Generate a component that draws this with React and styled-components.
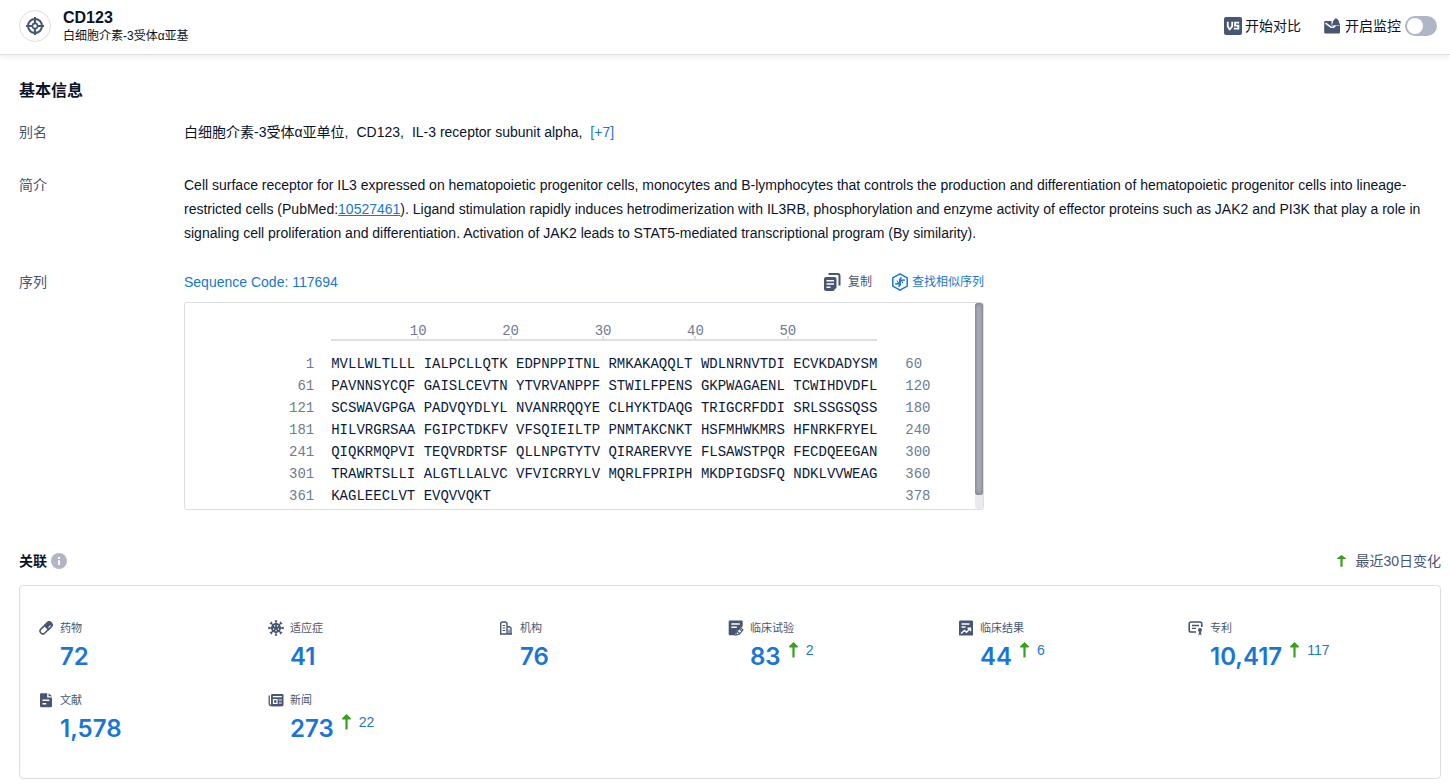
import React, { useState } from 'react'
import styled, { createGlobalStyle } from 'styled-components'


const sequence = [
    [1, 'MVLLWLTLLL IALPCLLQTK EDPNPPITNL RMKAKAQQLT WDLNRNVTDI ECVKDADYSM', 60],
    [61, 'PAVNNSYCQF GAISLCEVTN YTVRVANPPF STWILFPENS GKPWAGAENL TCWIHDVDFL', 120],
    [121, 'SCSWAVGPGA PADVQYDLYL NVANRRQQYE CLHYKTDAQG TRIGCRFDDI SRLSSGSQSS', 180],
    [181, 'HILVRGRSAA FGIPCTDKFV VFSQIEILTP PNMTAKCNKT HSFMHWKMRS HFNRKFRYEL', 240],
    [241, 'QIQKRMQPVI TEQVRDRTSF QLLNPGTYTV QIRARERVYE FLSAWSTPQR FECDQEEGAN', 300],
    [301, 'TRAWRTSLLI ALGTLLALVC VFVICRRYLV MQRLFPRIPH MKDPIGDSFQ NDKLVVWEAG', 360],
    [361, 'KAGLEECLVT EVQVVQKT', 378],
]


/* icons */
const TargetIcon = () => (
    <svg width='18' height='18' viewBox='0 0 18 18' fill='none' stroke='currentColor' strokeWidth='2'>
        <circle cx='9' cy='9' r='7' />
        <circle cx='9' cy='9' r='2.6' strokeWidth='1.6' />
        <path d='M9 0v6M9 12v6M0 9h6M12 9h6' strokeWidth='2.2' />
    </svg>
)

const VsIcon = () => (
    <svg width='18' height='18' viewBox='0 0 18 18'>
        <rect width='18' height='18' rx='2' fill='currentColor' />
        <path d='M3.8 4.800v4.400l1.700 3.200h.4l2.300-3.200V4.800M15.200 5.700h-4.200v3h3.400v3H9.800' fill='none' stroke='#fff' strokeWidth='1.800' />
    </svg>
)

const MonitorIcon = () => (
    <svg width='17' height='16' viewBox='0 0 17 16' fill='currentColor'>
        <path d='M1.200 3H7.500v4.500H16v7a1 1 0 0 1-1 1H1.200a1 1 0 0 1-1-1V4a1 1 0 0 1 1-1z' />
        <path d='M1.500 5.200L7 9.200h2.500l2-1.500' fill='none' stroke='#fff' strokeWidth='1.500' />
        <path d='M12 .2c.5 0 .9.400.9.900 1.500.6 2 2 2.200 3.300L16.200 7H7.800l1.100-2.600c.2-1.300.7-2.700 2.200-3.300 0-.5.4-.9.9-.9z' />
    </svg>
)

const CopyIcon = () => (
    <svg width='17' height='18' viewBox='0 0 17 18'>
        <path d='M4.500 1h9A2 2 0 0 1 15.500 3v9.500' fill='none' stroke='currentColor' strokeWidth='2' />
        <path d='M2 4h8.500a2 2 0 0 1 2 2v8.500L9.500 18H2a2 2 0 0 1-2-2V6a2 2 0 0 1 2-2z' fill='currentColor' />
        <path d='M2.500 7.700h7.500M2.500 11h7.500M2.500 14.300h4' stroke='#fff' strokeWidth='1.500' />
    </svg>
)

const SimilarIcon = () => (
    <svg width='16' height='18' viewBox='0 0 16 18' fill='none' stroke='currentColor' strokeWidth='1.500'>
        <path d='M8 .9l7.200 4v8.200L8 17.100.8 13.100V4.900z' />
        <path d='M3.200 10.800c2.500.4 4-.2 4.800-1.800s2.300-2.200 4.800-1.800M9.500 4.200C7.500 6 7.200 7.500 8 9s.5 3-1.500 4.800' />
        <path d='M5 7.500l1.600 3M9.400 7.400l1.600 3M7.200 6.500l2.600.6M6.200 11.200l2.400.2' strokeWidth='1' />
    </svg>
)

const InfoIcon = () => (
    <svg width='16' height='16' viewBox='0 0 16 16'>
        <circle cx='8' cy='8' r='8' fill='#b0b6c5' />
        <path d='M7 4h2v2H7zM7 7.200h2V12H7z' fill='#fff' />
    </svg>
)

const UpArrow = ({ size = 16 }) => (
    <svg width='9' height={size} viewBox='0 0 9 16' preserveAspectRatio='none'>
        <path d='M4.500 0L8.800 4.300a.6.600 0 0 1-.4 1.100H5.600V15.500H3.400V5.400H.6a.6.600 0 0 1-.4-1.100z' fill='#38a01c' />
    </svg>
)

const DrugIcon = () => (
    <svg width='16' height='16' viewBox='0 0 16 16'>
        <g transform='rotate(45 8 8)'>
            <rect x='5.200' y='.8' width='5.600' height='14.400' rx='2.800' fill='none' stroke='currentColor' strokeWidth='1.500' />
            <path d='M4.500 8V3.600a3.500 3.500 0 0 1 7 0V8z' fill='currentColor' />
            <path d='M9.500 3v3' stroke='#fff' strokeWidth='1' />
        </g>
    </svg>
)

const DiseaseIcon = () => (
    <svg width='16' height='16' viewBox='0 0 16 16'>
        <circle cx='8' cy='8' r='5' fill='currentColor' />
        <path d='M8 1v14M1 8h14M3 3l10 10M13 3L3 13' stroke='currentColor' strokeWidth='1.300' />
        <path d='M6.800 .9h2.400M6.800 15.100h2.400M.9 6.800v2.400M15.100 6.800v2.400M2 4l2-2M12 2l2 2M2 12l2 2M12 14l2-2' stroke='currentColor' strokeWidth='1.300' />
        <path d='M6 5.200h1.300v1.300H6zM9 5.200h1.300v1.300H9zM5 8.500h1.200v1.200H5zM9.800 8.500h1.200v1.200H9.800zM7.400 10h1.200v1.200H7.400z' fill='#fff' />
    </svg>
)

const OrgIcon = () => (
    <svg width='16' height='16' viewBox='0 0 16 16' fill='none' stroke='currentColor' strokeWidth='1.400'>
        <path d='M9 14H2.700V3.200L4.200 2h3.300L9 3.200zM9 6.800h2.500L13 8v6H9M2 14h12' />
        <path d='M4.600 5.500h2.600M4.600 8h2.600M4.600 10.500h2.600M11 9.500V14' strokeWidth='1.100' />
    </svg>
)

const TrialIcon = () => (
    <svg width='16' height='16' viewBox='0 0 16 16'>
        <path d='M1.700 .6h12a1 1 0 0 1 1 1v4.600L8.500 11 7 15.300H1.700a1 1 0 0 1-1-1V1.600a1 1 0 0 1 1-1z' fill='currentColor' />
        <path d='M3.300 4h8.500M3.300 7.200h5.500' stroke='#fff' strokeWidth='1.500' />
        <path d='M12.500 7.500L15 10l-3.500 4-3.700 1.200.9-3.800zM9.500 11.500l2 2M11.700 9.200l2 2' fill='none' stroke='currentColor' strokeWidth='1.100' />
    </svg>
)

const ResultIcon = () => (
    <svg width='16' height='16' viewBox='0 0 16 16'>
        <rect x='1' y='.6' width='14' height='15' rx='1.200' fill='currentColor' />
        <path d='M3.500 4h8M3.500 7h4M3 13.500l3.500-3 2 1.700 3.700-4M9.500 8.200h3v3' fill='none' stroke='#fff' strokeWidth='1.400' />
    </svg>
)

const PatentIcon = () => (
    <svg width='16' height='16' viewBox='0 0 16 16' fill='none' stroke='currentColor' strokeWidth='1.600'>
        <path d='M8 12H3a1.800 1.800 0 0 1-1.800-1.800V3.800A1.800 1.800 0 0 1 3 2h9a1.800 1.800 0 0 1 1.800 1.800V7' />
        <path d='M4 5.500h7M4 8.300h4' strokeWidth='1.300' />
        <circle cx='12' cy='10' r='2' fill='currentColor' stroke='none' />
        <path d='M11.200 11.500l-.8 4 1.600-1.200 1.600 1.200-.8-4z' fill='currentColor' stroke='none' />
    </svg>
)

const PaperIcon = () => (
    <svg width='16' height='16' viewBox='0 0 16 16'>
        <path d='M3.200 1.200h6v4.300h4.800V14a1.200 1.200 0 0 1-1.200 1.200H3.200A1.200 1.200 0 0 1 2 14V2.400a1.200 1.200 0 0 1 1.200-1.200zM10.600 1.200L14 4.200h-3.400z' fill='currentColor' />
        <path d='M4.500 8.200h6.800M4.500 11.700h3.800' stroke='#fff' strokeWidth='1.400' />
    </svg>
)

const NewsIcon = () => (
    <svg width='16' height='16' viewBox='0 0 16 16'>
        <path d='M1.200 3.500V11.500a2 2 0 0 0 2 2H13' fill='none' stroke='currentColor' strokeWidth='1.300' />
        <rect x='3' y='2' width='12.500' height='12.200' rx='1.300' fill='currentColor' />
        <path d='M4.800 4.600h9M10.800 8h3M10.800 11h3' stroke='#fff' strokeWidth='1.200' />
        <rect x='5.500' y='7.600' width='3.500' height='3.800' fill='none' stroke='#fff' strokeWidth='1.200' />
    </svg>
)


const stats = [
    { icon: <DrugIcon />, label: '药物', value: '72' },
    { icon: <DiseaseIcon />, label: '适应症', value: '41' },
    { icon: <OrgIcon />, label: '机构', value: '76' },
    { icon: <TrialIcon />, label: '临床试验', value: '83', change: '2' },
    { icon: <ResultIcon />, label: '临床结果', value: '44', change: '6' },
    { icon: <PatentIcon />, label: '专利', value: '10,417', change: '117' },
    { icon: <PaperIcon />, label: '文献', value: '1,578' },
    { icon: <NewsIcon />, label: '新闻', value: '273', change: '22' },
]


const App = () => {
    const [monitor, setMonitor] = useState(false)

    return(
        <>
            <GlobalStyle />
            <Header>
                <Avatar><TargetIcon /></Avatar>
                <Names>
                    <Title>CD123</Title>
                    <Subtitle>白细胞介素-3受体α亚基</Subtitle>
                </Names>
                <HeaderActions>
                    <CompareButton type='button'><VsIcon />开始对比</CompareButton>
                    <MonitorLabel>
                        <MonitorIcon />
                        <span>开启监控</span>
                        <Switch type='checkbox' checked={monitor} onChange={e => setMonitor(e.target.checked)} />
                    </MonitorLabel>
                </HeaderActions>
            </Header>

            <Main>
                <SectionTitle>基本信息</SectionTitle>
                <InfoList>
                    <InfoRow>
                        <Term>别名</Term>
                        <Aliases>
                            <span>白细胞介素-3受体α亚单位,</span>
                            <span>CD123,</span>
                            <span>IL-3 receptor subunit alpha,</span>
                            <Link href='#more'>[+7]</Link>
                        </Aliases>
                    </InfoRow>
                    <InfoRow>
                        <Term>简介</Term>
                        <Value>
                            Cell surface receptor for IL3 expressed on hematopoietic progenitor cells, monocytes and B-lymphocytes that controls the production and differentiation of hematopoietic progenitor cells into lineage-restricted cells (PubMed:<Link $underline href='#10527461'>10527461</Link>). Ligand stimulation rapidly induces hetrodimerization with IL3RB, phosphorylation and enzyme activity of effector proteins such as JAK2 and PI3K that play a role in signaling cell proliferation and differentiation. Activation of JAK2 leads to STAT5-mediated transcriptional program (By similarity).
                        </Value>
                    </InfoRow>
                    <InfoRow>
                        <Term>序列</Term>
                        <SequenceBlock>
                            <SequenceHead>
                                <Link href='#117694'>Sequence Code: 117694</Link>
                                <SequenceActions>
                                    <ToolButton type='button'><CopyIcon />复制</ToolButton>
                                    <ToolButton type='button' $primary><SimilarIcon />查找相似序列</ToolButton>
                                </SequenceActions>
                            </SequenceHead>
                            <SequenceBox>
                                <SequenceScroll>
                                    <SequenceTable>
                                        <thead>
                                            <tr>
                                                <td />
                                                <RulerCell>
                                                    <Ruler>
                                                        {[10, 20, 30, 40, 50].map(n => <Mark key={n}><span>{n}</span></Mark>)}
                                                    </Ruler>
                                                </RulerCell>
                                                <td />
                                            </tr>
                                        </thead>
                                        <tbody>
                                            {sequence.map(([start, letters, end]) => (
                                                <tr key={start}>
                                                    <Position $start>{start}</Position>
                                                    <Letters>{letters}</Letters>
                                                    <Position>{end}</Position>
                                                </tr>
                                            ))}
                                        </tbody>
                                    </SequenceTable>
                                </SequenceScroll>
                                <Track><Thumb /></Track>
                            </SequenceBox>
                        </SequenceBlock>
                    </InfoRow>
                </InfoList>

                <RelatedHead>
                    <RelatedTitle>关联<InfoIcon /></RelatedTitle>
                    <Legend><UpArrow size={12} />最近30日变化</Legend>
                </RelatedHead>
                <Panel>
                    {stats.map(item => (
                        <Stat key={item.label}>
                            {item.icon}
                            <div>
                                <StatLabel>{item.label}</StatLabel>
                                <StatNumbers>
                                    <StatValue href='#stat'>{item.value}</StatValue>
                                    {item.change && <StatChange href='#change'><UpArrow />{item.change}</StatChange>}
                                </StatNumbers>
                            </div>
                        </Stat>
                    ))}
                </Panel>
            </Main>
        </>
    )
}



export default App



const GlobalStyle = createGlobalStyle`
    *{
        box-sizing: border-box;
    }

    body{
        margin: 0;
        background: #fff;
        color: #0b1429;
        font-family: 'Liberation Sans', Arial, 'Noto Sans CJK SC', sans-serif;
        font-size: 14px;
        line-height: 24px;
    }

    button{
        border: 0;
        padding: 0;
        background: none;
        font: inherit;
        cursor: pointer;
    }

    svg{
        flex: none;
        display: block;
    }
`;


/* header */
const Header = styled.header`
    display: flex;
    align-items: center;
    gap: 12px;
    padding: 8px 13px 10px 19px;
    border-bottom: 1px solid #dcdee6;
    box-shadow: 0 2px 5px rgba(20,30,60,0.08);
`;

const Avatar = styled.div`
    width: 32px;
    height: 32px;
    border: 1px solid #dcdee6;
    border-radius: 50%;
    color: #475672;
    display: flex;
    justify-content: center;
    align-items: center;
`;

const Names = styled.div`
    flex: 1;
`;

const Title = styled.h1`
    margin: 0;
    font-size: 16px;
    line-height: 20px;
`;

const Subtitle = styled.div`
    font-size: 12px;
    line-height: 16px;
`;

const HeaderActions = styled.div`
    display: flex;
    align-items: center;
    gap: 23px;

    svg{
        color: #475672;
    }
`;

const CompareButton = styled.button`
    color: inherit;
    display: flex;
    align-items: center;
    gap: 3px;
`;

const MonitorLabel = styled.label`
    display: flex;
    align-items: center;
    gap: 4px;
`;

const Switch = styled.input`
    appearance: none;
    margin: 0;
    width: 32px;
    height: 20px;
    padding: 2px;
    border-radius: 10px;
    background: ${props => props.checked ? '#1976d6' : '#b0b6c5'};
    display: flex;
    justify-content: ${props => props.checked ? 'flex-end' : 'flex-start'};

    &::before{
        content: '';
        width: 16px;
        height: 16px;
        border-radius: 50%;
        background: #fff;
    }
`;


/* basic info */
const Main = styled.main`
    padding: 24px 9px 5px 19px;
`;

const SectionTitle = styled.h2`
    margin: 0 0 17px;
    font-size: 16px;
    line-height: 24px;
`;

const InfoList = styled.dl`
    margin: 0;
    display: grid;
    gap: 25px;
`;

const InfoRow = styled.div`
    display: grid;
    grid-template-columns: 165px 1fr;
    min-height: 28px;
`;

const Term = styled.dt`
    color: #475672;
`;

const Value = styled.dd`
    margin: 0;
`;

const Aliases = styled(Value)`
    display: flex;
    flex-wrap: wrap;
    column-gap: 8px;
`;

const Link = styled.a`
    color: #1976d6;
    text-decoration: ${props => props.$underline ? 'underline' : 'none'};
`;


/* sequence */
const SequenceBlock = styled(Value)`
    max-width: 800px;
`;

const SequenceHead = styled.div`
    display: flex;
    justify-content: space-between;
    margin-bottom: 8px;
`;

const SequenceActions = styled.div`
    display: flex;
    gap: 20px;
`;

const ToolButton = styled.button`
    color: ${props => props.$primary ? '#1976d6' : '#475672'};
    font-size: 12px;
    display: flex;
    align-items: center;
    gap: ${props => props.$primary ? '4px' : '7px'};
`;

const SequenceBox = styled.div`
    height: 208px;
    border: 1px solid #dcdee6;
    border-radius: 3px;
    display: flex;
`;

const SequenceScroll = styled.div`
    flex: 1;
    padding: 20px 0 0 104px;
    overflow: auto;
    scrollbar-width: none;
`;

const SequenceTable = styled.table`
    border-collapse: collapse;
    font-family: 'Courier New', 'Liberation Mono', monospace;
    font-size: 14px;
    line-height: 22px;

    td{
        padding: 0;
    }
`;

const RulerCell = styled.td`
    &&{
        padding: 0 28px 12px 17px;
    }
`;

const Ruler = styled.div`
    display: flex;
    padding-left: 3px;
    border-bottom: 2px solid #dcdee6;
    line-height: 16px;
    color: #6f7b93;
`;

const Mark = styled.div`
    width: 11ch;
    display: flex;
    justify-content: flex-end;

    span{
        display: flex;
        flex-direction: column;
        align-items: center;
    }

    span::after{
        content: '';
        width: 2px;
        height: 3px;
        margin-top: -3px;
        background: #dcdee6;
    }
`;

const Position = styled.td`
    color: #6f7b93;
    text-align: ${props => props.$start ? 'right' : 'left'};
`;

const Letters = styled.td`
    color: #0b1a3a;
    white-space: pre;

    &&{
        padding: 0 28px 0 17px;
    }
`;

const Track = styled.div`
    width: 8px;
    border-radius: 3px;
    background: #e9eaef;
`;

const Thumb = styled.div`
    height: 93%;
    border-radius: 3px;
    background: #a8adb9;
    box-shadow: inset 0 0 4px rgba(0,0,0,0.4);
`;


/* related */
const RelatedHead = styled.div`
    display: flex;
    justify-content: space-between;
    margin: 39px 0 12px;
`;

const RelatedTitle = styled.h3`
    margin: 0;
    font-size: 14px;
    display: flex;
    align-items: center;
    gap: 4px;
`;

const Legend = styled.div`
    color: #475672;
    display: flex;
    align-items: center;
    gap: 9px;
`;

const Panel = styled.section`
    border: 1px solid #dcdee6;
    border-radius: 4px;
    padding: 34px 22px 33px 18px;
    display: grid;
    grid-template-columns: repeat(6, 1fr);
    row-gap: 19px;
`;

const Stat = styled.div`
    display: flex;
    gap: 6px;

    svg{
        color: #475672;
    }
`;

const StatLabel = styled.div`
    color: #475672;
    font-size: 11px;
    line-height: 16px;
`;

const StatNumbers = styled.div`
    display: flex;
    gap: 8px;
    padding-top: 5px;
`;

const StatValue = styled.a`
    color: #1976d6;
    font-family: Inter, sans-serif;
    font-size: 24px;
    font-weight: 600;
    line-height: 32px;
    text-decoration: none;
`;

const StatChange = styled.a`
    color: #1976d6;
    height: 18px;
    display: flex;
    align-items: center;
    gap: 8px;
    text-decoration: none;
`;
